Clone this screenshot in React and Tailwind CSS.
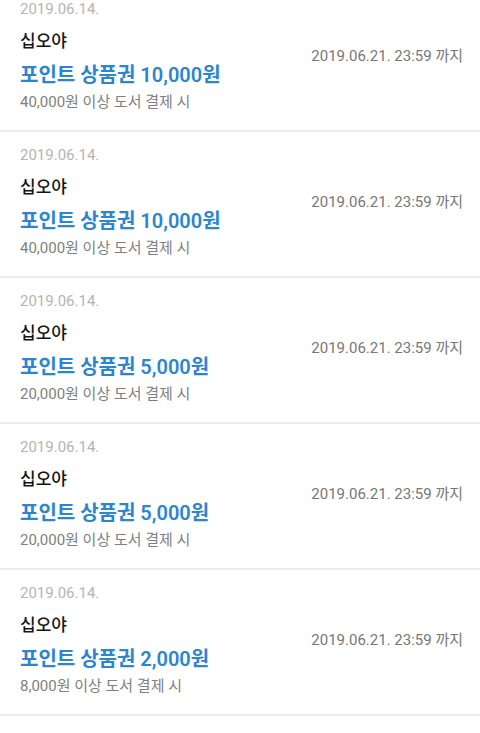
const items = [
  { amount: "10,000원", cond: "40,000원 이상 도서 결제 시" },
  { amount: "10,000원", cond: "40,000원 이상 도서 결제 시" },
  { amount: "5,000원", cond: "20,000원 이상 도서 결제 시" },
  { amount: "5,000원", cond: "20,000원 이상 도서 결제 시" },
  { amount: "2,000원", cond: "8,000원 이상 도서 결제 시" },
];

export default function App() {
  return (
    <div
      className="w-[480px] h-[733px] overflow-hidden bg-white"
      style={{ fontFamily: 'Roboto, "Noto Sans CJK KR", sans-serif' }}
    >
      <div className="-mt-[14px]">
        {items.map((it, i) => (
          <div key={i} className="flex items-start justify-between h-[146px] pl-5 pr-[17px] border-b-2 border-[#ececec]">
            <div className="flex flex-col pt-[12px]">
              <div className="text-[15px] leading-[22px] text-[#b4b4b4]">2019.06.14.</div>
              <div className="mt-[9px] text-[17px] leading-[24px] text-[#151515] font-medium">십오야</div>
              <div className="mt-[8px] text-[20px] leading-[28px] text-[#2b86cf] font-semibold">포인트 상품권 {it.amount}</div>
              <div className="mt-[3px] text-[15px] leading-[20px] text-[#808080]">{it.cond}</div>
            </div>
            <div className="self-center mb-[4px] text-[15px] leading-[20px] text-[#777777]">2019.06.21. 23:59 까지</div>
          </div>
        ))}
      </div>
    </div>
  );
}
